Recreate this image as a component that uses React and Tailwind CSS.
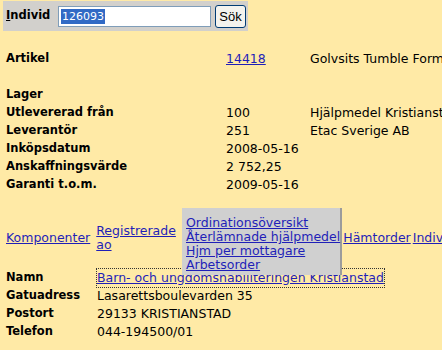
export default function App() {
  const info = [
    { label: "Artikel", value: "14418", link: true, extra: "Golvsits Tumble Form" },
    { label: "", value: "", extra: "" },
    { label: "Lager", value: "", extra: "" },
    { label: "Utlevererad från", value: "100", extra: "Hjälpmedel Kristianstad" },
    { label: "Leverantör", value: "251", extra: "Etac Sverige AB" },
    { label: "Inköpsdatum", value: "2008-05-16", extra: "" },
    { label: "Anskaffningsvärde", value: "2 752,25", extra: "" },
    { label: "Garanti t.o.m.", value: "2009-05-16", extra: "" },
  ];

  const address = [
    { label: "Gatuadress", value: "Lasarettsboulevarden 35" },
    { label: "Postort", value: "29133 KRISTIANSTAD" },
    { label: "Telefon", value: "044-194500/01" },
  ];

  const menu = [
    "Ordinationsöversikt",
    "Återlämnade hjälpmedel",
    "Hjm per mottagare",
    "Arbetsorder",
  ];

  const link = "text-[#1f1fb8] underline";

  return (
    <div className="w-[442px] h-[350px] overflow-hidden bg-[#ffeaa6] text-[12.5px] text-black font-['DejaVu_Sans',sans-serif]">
      {/* Search bar */}
      <div className="pt-[1px] pl-[3px]">
        <div className="w-[245px] h-[30px] bg-[#d2d0cc] flex items-center pl-[3px]">
          <span className="font-bold text-[11.5px] w-[49px] shrink-0">
            <span className="underline">I</span>ndivid
          </span>
          <div className="ml-[3px] w-[153px] h-[21px] shrink-0 bg-white border border-[#7f9db9] flex items-center pl-[2px]">
            <span className="bg-[#316ac5] text-white text-[11px] leading-[15px] px-[1px]">126093</span>
          </div>
          <button className="ml-[4px] w-[31px] h-[23px] shrink-0 rounded-[3px] border border-[#003c74] bg-[#f4f3ee] text-[13px] font-['Liberation_Sans',sans-serif] leading-none">
            Sök
          </button>
        </div>
      </div>

      {/* Article info */}
      <div className="mt-[19px] pl-[6px]">
        {info.map((r, i) => (
          <div key={i} className="flex h-[18px] items-center whitespace-nowrap">
            <span className="w-[220px] shrink-0 font-bold text-[11.5px]">{r.label}</span>
            <span className="w-[84px] shrink-0">
              {r.link ? <span className={link}>{r.value}</span> : r.value}
            </span>
            <span>{r.extra}</span>
          </div>
        ))}
      </div>

      {/* Links row */}
      <div className="relative mt-[28px] pl-[6px] flex items-center h-[32px] whitespace-nowrap">
        <span className={`${link} shrink-0`}>Komponenter</span>
        <span className={`${link} ml-[6px] leading-[14px] whitespace-normal w-[80px] shrink-0`}>
          Registrerade ao
        </span>
        <span className="w-[167px] shrink-0" />
        <span className={`${link} shrink-0`}>Hämtorder</span>
        <span className={`${link} ml-[2px] shrink-0`}>Individ</span>

        <div className="absolute left-[182px] top-[-14px] w-[160px] h-[67px] bg-[#d0d0d0] border-r-2 border-[#9c9c9c] z-10 pt-[8px] pl-[4px]">
          {menu.map((m) => (
            <div key={m} className="leading-[14px]">
              <span className="text-[#1f1fb8] underline">{m}</span>
            </div>
          ))}
        </div>
      </div>

      {/* Address */}
      <div className="mt-[15px] pl-[6px]">
        <div className="flex h-[18px] items-center whitespace-nowrap">
          <span className="w-[91px] shrink-0 font-bold text-[11.5px]">Namn</span>
          <span className={`${link} outline outline-1 outline-dotted outline-[#333]`}>
            Barn- och ungdomshabiliteringen Kristianstad
          </span>
        </div>
        {address.map((r) => (
          <div key={r.label} className="flex h-[18px] items-center whitespace-nowrap">
            <span className="w-[91px] shrink-0 font-bold text-[11.5px]">{r.label}</span>
            <span>{r.value}</span>
          </div>
        ))}
      </div>
    </div>
  );
}
